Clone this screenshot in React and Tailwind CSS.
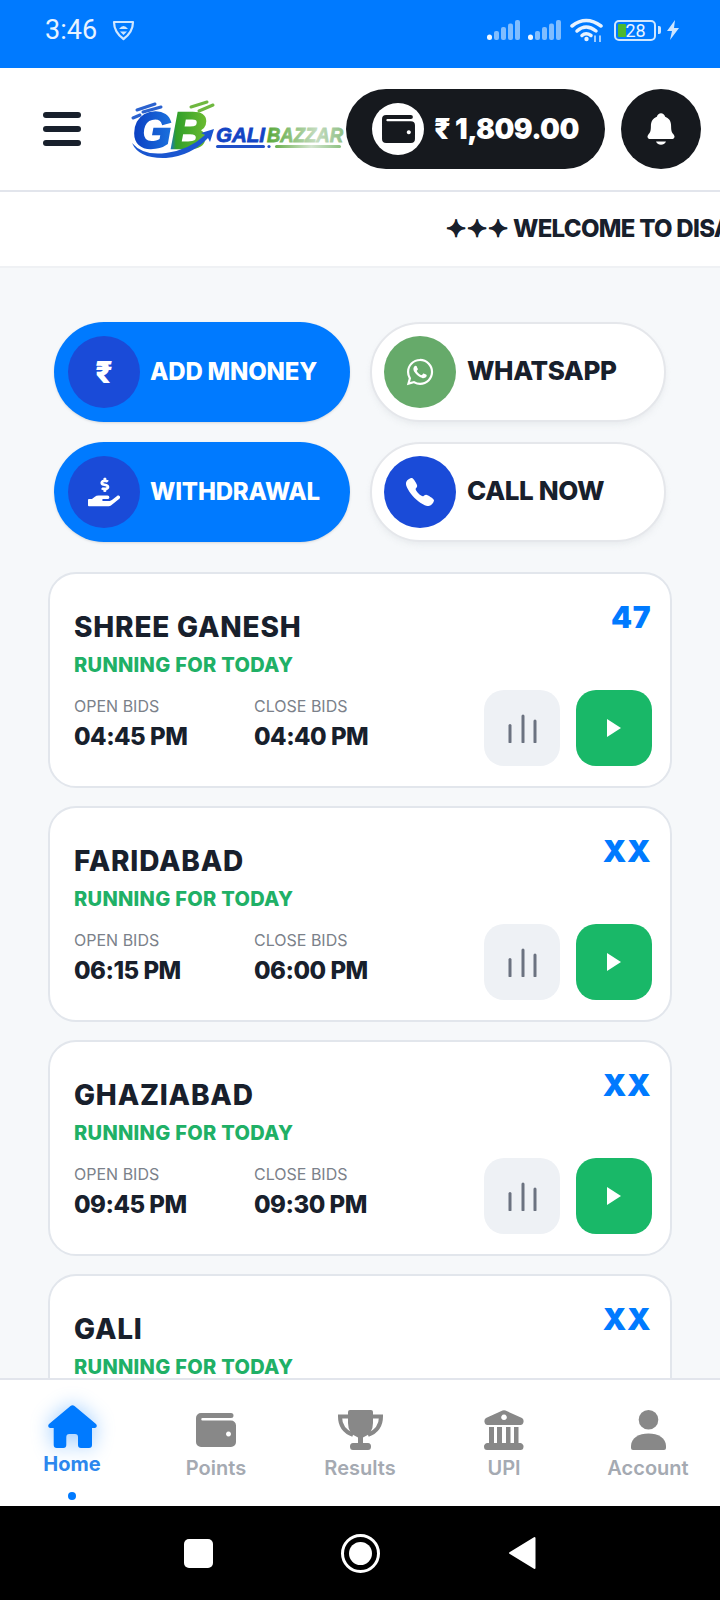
import React from "react";
import { IoNotifications, IoLogoWhatsapp, IoCall } from "react-icons/io5";
import { FaHandHoldingUsd } from "react-icons/fa";

const games = [
  { name: "SHREE GANESH", result: "47", open: "04:45 PM", close: "04:40 PM" },
  { name: "FARIDABAD", result: "XX", open: "06:15 PM", close: "06:00 PM" },
  { name: "GHAZIABAD", result: "XX", open: "09:45 PM", close: "09:30 PM" },
  { name: "GALI", result: "XX", open: "11:15 PM", close: "11:00 PM" },
];

function Signal() {
  return (
    <svg width="33" height="20" viewBox="0 0 33 20">
      <rect x="0" y="14.500" width="5" height="5.500" rx="2.500" fill="#ffffff" opacity="0.95" />
      <rect x="7" y="11" width="5" height="9" rx="2" fill="#ffffff" opacity="0.5" />
      <rect x="14" y="7" width="5" height="13" rx="2" fill="#ffffff" opacity="0.5" />
      <rect x="21" y="3.500" width="5" height="16.500" rx="2" fill="#ffffff" opacity="0.5" />
      <rect x="28" y="0" width="5" height="20" rx="2" fill="#ffffff" opacity="0.5" />
    </svg>
  );
}

function Wallet({ width, height, color }) {
  return (
    <svg width={width} height={height} viewBox="0 0 40 34" fill={color}>
      <path
        fillRule="evenodd"
        d="M5 0 H35 a2.500 2.500 0 0 1 0 5 H6.500 a1.250 1.250 0 0 0 0 2.500 H35 a5 5 0 0 1 5 5 V29 a5 5 0 0 1 -5 5 H5 a5 5 0 0 1 -5 -5 V5 a5 5 0 0 1 5 -5 Z M32.500 18.500 a2.500 2.500 0 1 0 0.010 0 Z"
      />
    </svg>
  );
}

function Home() {
  return (
    <svg width="49" height="43" viewBox="0 0 49 43" fill="#007aff" className="drop-shadow-[0_0_10px_rgba(0,122,255,0.4)]">
      <path d="M22.500 1 Q24.500 -0.500 26.500 1 L48 19 Q50 22 47 23 H44 V40 Q44 43 41 43 H33 Q30 43 30 40 V32 Q30 29 27 29 H21.300 Q18.300 29 18.300 32 V40 Q18.300 43 15.300 43 H8.700 Q5.700 43 5.700 40 V23 H2 Q-1 22 1 19 Z" />
    </svg>
  );
}

function Trophy() {
  return (
    <svg width="45" height="40" viewBox="0 0 45 40" fill="#888888">
      <path d="M10 2 Q10 0 12 0 H33 Q35 0 35 2 V13 Q35 24 25 27.500 V33 H30 Q33 33 33 36.500 Q33 40 30 40 H15 Q12 40 12 36.500 Q12 33 15 33 H20 V27.500 Q10 24 10 13 Z" />
      <path d="M10 6.500 H2 Q2 20 15 25 M35 6.500 H43 Q43 20 30 25" fill="none" stroke="#888888" strokeWidth="4" />
    </svg>
  );
}

function Bank() {
  return (
    <svg width="40" height="40" viewBox="0 0 40 40" fill="#888888">
      <path fillRule="evenodd" d="M18.500 0.500 Q20 -0.200 21.500 0.500 L38 8 Q40 9.500 39.500 12 Q39 15 36.500 15 H3.500 Q1 15 0.500 12 Q0 9.500 2 8 Z M20 4.500 a2.800 2.800 0 1 0 0.010 0 Z" />
      <rect x="5" y="17" width="5" height="16" />
      <rect x="13" y="17" width="5" height="16" />
      <rect x="22" y="17" width="4.500" height="16" />
      <rect x="30" y="17" width="4.500" height="16" />
      <path d="M3 33 H36.500 Q39.500 34 39.500 36.500 Q39.500 40 36.500 40 H3 Q0 40 0 36.500 Q0 34 3 33 Z" />
    </svg>
  );
}

function Person() {
  return (
    <svg width="35" height="40" viewBox="0 0 35 40" fill="#888888">
      <circle cx="17.500" cy="9.800" r="9.800" />
      <path d="M0 36 C0 28 8 23.500 17.500 23.500 C27 23.500 35 28 35 36 V38 Q35 40 33 40 H2 Q0 40 0 38 Z" />
    </svg>
  );
}

function Logo() {
  return (
    <svg width="216" height="62" viewBox="0 0 216 62" className="shrink-0 -ml-[1px]">
      <defs>
        <linearGradient id="gb" x1="0" x2="1" y1="0" y2="0">
          <stop offset="0" stopColor="#0c3fc2" />
          <stop offset="0.5" stopColor="#1a6fdc" />
          <stop offset="0.58" stopColor="#2f9f2a" />
          <stop offset="1" stopColor="#6cbb30" />
        </linearGradient>
        <linearGradient id="baz" x1="0" x2="1" y1="0" y2="0">
          <stop offset="0" stopColor="#58a83a" />
          <stop offset="0.65" stopColor="#c5dcc0" />
          <stop offset="1" stopColor="#8fbf85" />
        </linearGradient>
        <linearGradient id="bazLine" x1="0" x2="1" y1="0" y2="0">
          <stop offset="0" stopColor="#6bb04f" />
          <stop offset="0.55" stopColor="#d3e4cf" />
          <stop offset="1" stopColor="#8ec283" />
        </linearGradient>
      </defs>
      <g stroke="#2b62cf" strokeWidth="3" strokeLinecap="round">
        <path d="M8 12 L26 6" />
        <path d="M14 14 L32 9" />
        <path d="M4 20 L11 17" />
      </g>
      <g stroke="#6fb83f" strokeWidth="3" strokeLinecap="round">
        <path d="M62 9 L78 4" />
        <path d="M70 13 L84 7" />
      </g>
      <text x="4" y="50" fontFamily="'Liberation Sans', sans-serif" fontStyle="italic" fontWeight="700" fontSize="50" fill="url(#gb)" stroke="url(#gb)" strokeWidth="2.500" textLength="74" lengthAdjust="spacingAndGlyphs">GB</text>
      <path d="M3 45 Q14 58 37 55 Q60 52 76 37 L72 35 L85 31 L81 44 L79 40 Q62 58 37 60 Q10 61 3 45 Z" fill="#1a56d0" />
      <text x="87" y="44" fontFamily="'Liberation Sans', sans-serif" fontStyle="italic" fontWeight="700" fontSize="21" fill="#1344c4" stroke="#1344c4" strokeWidth="0.800" textLength="49" lengthAdjust="spacingAndGlyphs">GALI</text>
      <text x="138" y="44" fontFamily="'Liberation Sans', sans-serif" fontStyle="italic" fontWeight="700" fontSize="21" fill="url(#baz)" stroke="url(#baz)" strokeWidth="0.800" textLength="76" lengthAdjust="spacingAndGlyphs">BAZZAR</text>
      <rect x="87" y="47" width="49" height="3" rx="1.500" fill="#2050c8" />
      <circle cx="140" cy="48.500" r="1.600" fill="#2050c8" />
      <rect x="146" y="47" width="66" height="3" rx="1.500" fill="url(#bazLine)" />
    </svg>
  );
}

function ActionButton({ primary, circle, icon, label }) {
  return (
    <div className={primary
      ? "h-[100px] rounded-full bg-[#007aff] flex items-center pl-[14px] gap-[10px] shadow-sm"
      : "h-[100px] rounded-full bg-white border-2 border-[#e5e7eb] flex items-center pl-[12px] gap-[11px] shadow-md shadow-gray-200/60"}>
      <div className={`w-[72px] h-[72px] rounded-full flex items-center justify-center text-white shrink-0 ${circle}`}>
        {icon}
      </div>
      <span className={primary
        ? "text-[24px] leading-[30px] font-extrabold text-white tracking-[-0.2px]"
        : "text-[26px] leading-[32px] font-extrabold text-[#18202c] tracking-[-0.4px] -mt-[2px]"}>{label}</span>
    </div>
  );
}

function Card({ g }) {
  return (
    <div className="rounded-[28px] border-2 border-[#e2e6ec] bg-white pt-[25px] pb-[20px] pl-[24px] pr-[18px] shrink-0">
      <div className="flex items-start justify-between pr-[1px]">
        <div className="mt-[10px] text-[28px] leading-[36px] font-extrabold text-[#18202c] tracking-[0.8px]">{g.name}</div>
        <div className="text-[30px] leading-[36px] font-black text-[#007aff] tracking-[0.5px]">{g.result}</div>
      </div>
      <div className="mt-[8px] text-[20px] leading-[24px] font-extrabold text-[#20b066] tracking-[0.3px]">RUNNING FOR TODAY</div>
      <div className="mt-[13px] flex items-start">
        <div className="w-[180px] pt-[6px]">
          <div className="text-[16px] leading-[20px] text-[#7b818a]">OPEN BIDS</div>
          <div className="mt-[6px] text-[24px] leading-[30px] font-extrabold text-[#18202c] tracking-[-0.5px]">{g.open}</div>
        </div>
        <div className="pt-[6px]">
          <div className="text-[16px] leading-[20px] text-[#7b818a]">CLOSE BIDS</div>
          <div className="mt-[6px] text-[24px] leading-[30px] font-extrabold text-[#18202c] tracking-[-0.5px]">{g.close}</div>
        </div>
        <div className="ml-auto flex gap-[16px]">
          <div className="w-[76px] h-[76px] rounded-[20px] bg-[#eef1f5] flex items-center justify-center">
            <svg width="30" height="30" viewBox="0 0 30 30" stroke="#6b7280" strokeWidth="3" strokeLinecap="round">
              <path d="M3 12.500 V29" />
              <path d="M16 3 V29" />
              <path d="M28 8 V29" />
            </svg>
          </div>
          <div className="w-[76px] h-[76px] rounded-[20px] bg-[#19b868] flex items-center justify-center">
            <svg width="14" height="18" viewBox="0 0 14 18" fill="#ffffff"><path d="M0 0 L14 9 L0 18 Z" /></svg>
          </div>
        </div>
      </div>
    </div>
  );
}

function NavItem({ icon, label }) {
  return (
    <div className="flex flex-col items-center pt-[30px]">
      <div className="h-[40px] flex items-center justify-center">{icon}</div>
      <div className="mt-[6px] text-[20px] leading-[24px] font-semibold text-[#a5aab2]">{label}</div>
    </div>
  );
}

export default function App() {
  return (
    <div className="w-[720px] h-[1600px] flex flex-col overflow-hidden bg-[#f6f8fa] font-['Inter',sans-serif]">
      {/* status bar */}
      <div className="h-[68px] shrink-0 bg-[#007aff] flex items-center pl-[45px] relative">
        <span className="text-[27px] leading-[32px] text-[#e8f3ff] font-['Roboto',sans-serif] -mt-[8px]">3:46</span>
        <svg width="23" height="21" viewBox="0 0 23 21" className="ml-[15px] -mt-[8px]" fill="none" stroke="#cfe6ff" strokeWidth="2.200" strokeLinejoin="round">
          <path d="M2 2 H21 Q21 12 11.500 19 Q2 12 2 2 Z" />
          <path d="M7 9 Q11.500 3 16 9 Z" fill="#cfe6ff" stroke="none" />
          <path d="M8 11.500 H15 L11.500 15 Z" fill="#cfe6ff" stroke="none" />
        </svg>
        <div className="ml-auto mr-[40px] -mt-[8px] flex items-center">
          <Signal />
          <div className="ml-[8px]"><Signal /></div>
          <svg width="34" height="24" viewBox="0 0 34 24" className="ml-[9px]" fill="none" stroke="#e8f3ff" strokeLinecap="round">
            <path d="M2 8 Q16 -3 31 8" strokeWidth="3.500" />
            <path d="M7 13 Q16 5 26 13" strokeWidth="3.500" />
            <path d="M12 17.500 Q16 14 21 17.500" strokeWidth="3.500" />
            <circle cx="16.500" cy="21" r="2.200" fill="#e8f3ff" stroke="none" />
            <path d="M25 24 V18 M30 24 V18" stroke="#cfe6ff" strokeWidth="1.500" />
          </svg>
          <div className="ml-[10px] relative w-[42px] h-[21px] rounded-[5px] border-2 border-[#cfe6ff] flex items-center justify-center overflow-hidden">
            <div className="absolute left-[2px] top-[2px] bottom-[2px] w-[8px] rounded-[1px] bg-[#4cb82e]" />
            <span className="relative text-[18px] leading-[17px] text-[#eaf4ff] font-['Roboto',sans-serif] ml-[1px]">28</span>
          </div>
          <div className="ml-[2px] w-[3px] h-[8px] rounded-r-[2px] bg-[#cfe6ff]" />
          <svg width="14" height="20" viewBox="0 0 14 20" className="ml-[5px]" fill="#cfe6ff"><path d="M9 0 L1 11 H6 L4 20 L13 8 H8 Z" /></svg>
        </div>
      </div>

      {/* header */}
      <div className="h-[124px] shrink-0 bg-white border-b-2 border-[#e2e5ec] flex items-center pl-[43px] pr-[19px]">
        <div className="w-[38px] flex flex-col gap-[8px] shrink-0">
          <div className="h-[6px] rounded-full bg-[#18202c]" />
          <div className="h-[6px] rounded-full bg-[#18202c]" />
          <div className="h-[6px] rounded-full bg-[#18202c]" />
        </div>
        <div className="ml-[49px]"><Logo /></div>
        <div className="ml-auto h-[80px] w-[259px] shrink-0 rounded-full bg-[#16191e] flex items-center pl-[26px] gap-[10px]">
          <div className="w-[52px] h-[52px] rounded-full bg-white flex items-center justify-center shrink-0">
            <Wallet width={33} height={28} color="#16191e" />
          </div>
          <span className="text-[28px] leading-[34px] font-black text-white tracking-[-0.6px] whitespace-nowrap">₹ 1,809.00</span>
        </div>
        <div className="ml-[16px] w-[80px] h-[80px] rounded-full bg-[#16191e] flex items-center justify-center shrink-0">
          <IoNotifications size={36} color="#ffffff" />
        </div>
      </div>

      {/* marquee */}
      <div className="h-[76px] shrink-0 bg-white border-b-2 border-[#eff1f4] flex items-center overflow-hidden pl-[446px]">
        <span className="text-[24px] leading-[30px] font-extrabold text-[#18202c] whitespace-nowrap tracking-[-0.7px]">
          <span className="[-webkit-text-stroke:1px_#18202c] tracking-[0.8px]">✦✦✦</span> WELCOME TO DISAWAR MATKA
        </span>
      </div>

      {/* main */}
      <div className="flex-1 min-h-0 overflow-hidden px-[48px] pt-[54px]">
        <div className="mx-[6px] grid grid-cols-2 gap-x-[20px] gap-y-[20px]">
          <ActionButton primary circle="bg-[#1a4bd8]" icon={<span className="text-[30px] font-black leading-none">₹</span>} label="ADD MNONEY" />
          <ActionButton circle="bg-[#66aa6a]" icon={<IoLogoWhatsapp size={30} />} label="WHATSAPP" />
          <ActionButton primary circle="bg-[#1a4bd8]" icon={<FaHandHoldingUsd size={32} />} label="WITHDRAWAL" />
          <ActionButton circle="bg-[#1a4bd8]" icon={<IoCall size={32} />} label="CALL NOW" />
        </div>
        <div className="mt-[30px] flex flex-col gap-[18px]">
          {games.map((g) => <Card key={g.name} g={g} />)}
        </div>
      </div>

      {/* bottom nav */}
      <div className="h-[128px] shrink-0 bg-white border-t-2 border-[#e2e5ec] grid grid-cols-5">
        <div className="flex flex-col items-center pt-[25px]">
          <Home />
          <div className="mt-[4px] text-[20px] leading-[24px] font-bold text-[#2e88ee]">Home</div>
          <div className="mt-[16px] w-[8px] h-[8px] rounded-full bg-[#007aff]" />
        </div>
        <NavItem icon={<Wallet width={40} height={34} color="#888888" />} label="Points" />
        <NavItem icon={<Trophy />} label="Results" />
        <NavItem icon={<Bank />} label="UPI" />
        <NavItem icon={<Person />} label="Account" />
      </div>

      {/* android nav */}
      <div className="h-[94px] shrink-0 bg-black relative flex items-center justify-center">
        <div className="absolute left-[184px] top-[33px] w-[29px] h-[29px] rounded-[5px] bg-white" />
        <div className="w-[39px] h-[39px] rounded-full border-[3.5px] border-white flex items-center justify-center">
          <div className="w-[23px] h-[23px] rounded-full bg-white" />
        </div>
        <svg width="28" height="34" viewBox="0 0 28 34" className="absolute left-[508px] top-[30px]" fill="#ffffff" stroke="#ffffff" strokeWidth="2" strokeLinejoin="round"><path d="M26.500 2 V32 L2 17 Z" /></svg>
      </div>
    </div>
  );
}
